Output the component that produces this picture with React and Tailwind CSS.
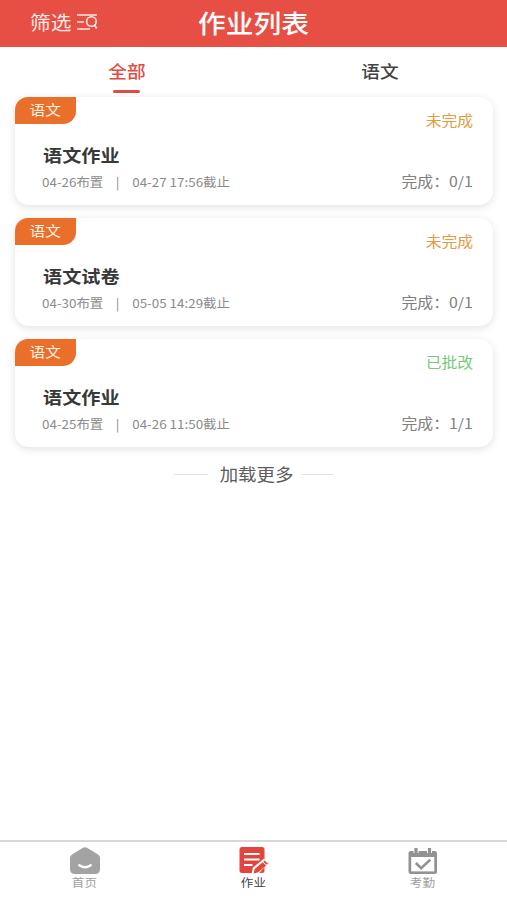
const homework = [
  { title: '语文作业', assigned: '04-26布置', due: '04-27 17:56截止', status: '未完成', done: '0/1' },
  { title: '语文试卷', assigned: '04-30布置', due: '05-05 14:29截止', status: '未完成', done: '0/1' },
  { title: '语文作业', assigned: '04-25布置', due: '04-26 11:50截止', status: '已批改', done: '1/1' },
];

function FilterIcon() {
  return (
    <svg width="22" height="18" viewBox="0 0 22 18" fill="none" stroke="#ffe9e5" strokeWidth="1.6">
      <path d="M0 2h20M0 9h7M0 16h13" />
      <ellipse cx="14.4" cy="8.5" rx="4.8" ry="4.8" />
      <path d="M17.4 12l2.3 3.4" strokeWidth="1.8" />
    </svg>
  );
}

function HomeIcon() {
  return (
    <svg width="30" height="27" viewBox="0 0 30 27">
      <path d="M13 .8Q15 -.3 17 .8L28 7.4Q30 8.6 30 11V22Q30 27 25 27H5Q0 27 0 22V11Q0 8.6 2 7.4Z" fill="#a3a3a3" />
      <path d="M9.3 18.3Q15 22.4 20.7 18.3" fill="none" stroke="#fff" strokeWidth="2.4" strokeLinecap="round" />
    </svg>
  );
}

function HomeworkIcon() {
  return (
    <svg width="29" height="27" viewBox="0 0 29 27">
      <rect x="0.5" width="25" height="26" rx="2.5" fill="#e3443c" />
      <path d="M5 7h15.5M5 12.5h15.5M5 18h8.5" stroke="#fff" strokeWidth="2.2" />
      <path d="M12.5 27l1.5-6.5L25 11.5l4 4.5L19.5 27Z" fill="#fff" />
      <path d="M14.6 26.6l1.1-4.6 7.9-6.7 3.5 3.1-7.9 6.8Z" fill="#e3443c" />
      <path d="M24.3 14.7l1.3-1.1 3.4 3-1.3 1.1Z" fill="#e3443c" />
    </svg>
  );
}

function AttendanceIcon() {
  return (
    <svg width="30" height="26" viewBox="0 0 30 26">
      <path d="M3 3H26.5Q29 3 29 5.5V23.5Q29 26 26.5 26H3Q.5 26 .5 23.5V5.5Q.5 3 3 3Z" fill="#929292" />
      <rect x="3.2" y="9" width="23.1" height="14.4" fill="#fff" />
      <path d="M8 0v5M21.5 0v5" stroke="#fff" strokeWidth="5" />
      <path d="M8 0v5M21.5 0v5" stroke="#929292" strokeWidth="3.2" />
      <path d="M7.8 15l5.4 5.2L22.3 11.6" fill="none" stroke="#929292" strokeWidth="2.6" />
    </svg>
  );
}

function HomeworkCard({ item }) {
  const statusColor = item.status === '已批改' ? 'text-[#76cb78]' : 'text-[#e39c45]';
  return (
    <article className="flex h-[108px] justify-between rounded-[14px] bg-white shadow-[0_2px_8px_rgba(0,0,0,0.12)]">
      <div className="flex flex-col items-start">
        <div className="flex h-[27px] w-[61px] items-center justify-center rounded-tl-[13px] rounded-br-[13px] bg-[#ea6f2b] pb-[3px]">
          <span className="scale-x-110 text-[14.2px] leading-5 text-[#fff3e5]">语文</span>
        </div>
        <h2 className="mt-[18px] ml-[27.5px] origin-left scale-x-110 text-[17.4px] leading-[26px] font-bold text-[#383838]">{item.title}</h2>
        <p className="mt-1 ml-[27px] flex origin-left scale-x-110 text-[12.2px] leading-[20px] whitespace-nowrap text-[#8b8b8b]">
          <span className="w-[67px]">{item.assigned}</span>
          <span className="w-[15px]">|</span>
          <span>{item.due}</span>
        </p>
      </div>
      <div className="flex flex-col items-end pt-3 pr-5 whitespace-nowrap">
        <span className={`origin-right scale-x-110 text-[14.4px] leading-[22px] ${statusColor}`}>{item.status}</span>
        <span className="mt-[39px] origin-right scale-x-110 text-[14.4px] leading-[22px] text-[#808080]">完成：{item.done}</span>
      </div>
    </article>
  );
}

function NavItem({ icon, label, active }) {
  return (
    <div className="flex flex-1 flex-col items-center">
      <div className="flex h-[27px] items-end">{icon}</div>
      <span className={`scale-x-110 text-[11.4px] leading-4 ${active ? 'text-[#444444]' : 'text-[#a0a0a0]'}`}>{label}</span>
    </div>
  );
}

export default function App() {
  return (
    <div className="flex h-[900px] w-[507px] flex-col overflow-hidden bg-white font-['Noto_Sans_CJK_SC',sans-serif]">
      <header className="grid h-[47px] shrink-0 grid-cols-3 items-center bg-[#e84f44] pb-[3px] text-white">
        <div className="flex items-center gap-[9px] pl-[30px]">
          <span className="origin-left scale-x-110 text-[18.8px] leading-7 text-[#ffece8]">筛选</span>
          <FilterIcon />
        </div>
        <h1 className="scale-x-110 text-center text-[25.2px] leading-9 font-medium">作业列表</h1>
      </header>

      <nav className="grid h-[50px] shrink-0 grid-cols-2 text-[17px] leading-6 font-medium">
        <div className="flex flex-col items-center pt-3 text-[#df4c43]">
          <span className="scale-x-110">全部</span>
          <span className="mt-[7px] h-[3px] w-[27px] rounded-full bg-[#df4c43]" />
        </div>
        <div className="flex flex-col items-center pt-3 text-[#444444]">
          <span className="scale-x-110">语文</span>
        </div>
      </nav>

      <main className="flex-1">
        <div className="flex flex-col gap-[13px] pr-[14px] pl-[15px]">
          {homework.map((item) => (
            <HomeworkCard key={item.assigned} item={item} />
          ))}
        </div>
        <div className="mt-[13px] flex items-center justify-center text-[#5d5d5d]">
          <span className="h-px w-[34px] bg-[#e2e2e2]" />
          <span className="mr-[10px] ml-[15px] scale-x-110 text-[16.8px] leading-7">加载更多</span>
          <span className="h-px w-[32px] bg-[#e2e2e2]" />
        </div>
      </main>

      <footer className="flex h-[60px] shrink-0 border-t-2 border-[#d7d7d7] pt-[5px]">
        <NavItem icon={<HomeIcon />} label="首页" />
        <NavItem icon={<HomeworkIcon />} label="作业" active />
        <NavItem icon={<AttendanceIcon />} label="考勤" />
      </footer>
    </div>
  );
}
